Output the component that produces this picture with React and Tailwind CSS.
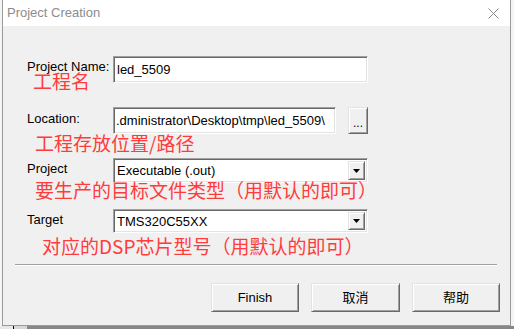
// Project Creation dialog (classic Win32 look) with red annotations

const sunken =
  'border border-t-[#a0a0a0] border-l-[#a0a0a0] border-b-white border-r-white shadow-[inset_1px_1px_0_#696969,inset_-1px_-1px_0_#e3e3e3] bg-white';
const raised =
  'border border-t-[#e3e3e3] border-l-[#e3e3e3] border-b-[#696969] border-r-[#696969] shadow-[inset_1px_1px_0_#ffffff,inset_-1px_-1px_0_#a0a0a0] bg-[#f0f0f0]';

const ui = "font-['Liberation_Sans','Noto_Sans_CJK_SC',sans-serif] text-[13px] text-black";
const note = "font-['Noto_Sans_CJK_SC',sans-serif] text-[19px] leading-[16px] h-[16px] text-[#ff3c3c] whitespace-nowrap";
const label = 'w-[86px] leading-[13px] pt-[4px]';

const Combo = ({ value, h }) => (
  <div className={`${sunken} ${h} w-[255px] flex items-center pl-[3px] pr-[2px]`}>
    <span className="flex-1 leading-[15px]">{value}</span>
    <div className={`${raised} w-[17px] h-[calc(100%-4px)] flex items-center justify-center`}>
      <svg width="7" height="4" viewBox="0 0 7 4">
        <path d="M0 0h7L3.5 4z" fill="#000" />
      </svg>
    </div>
  </div>
);

export default function App() {
  return (
    <div className={`w-[514px] h-[329px] bg-[#f4f4f4] overflow-hidden ${ui}`}>
      <div className="ml-[2px] w-[509px] h-[326px] border-x border-b border-[#9a9a9a] flex flex-col">
        {/* title bar */}
        <div className="h-[26px] bg-white flex items-center justify-between pl-[4px] pr-[11px]">
          <span className="text-[13px] text-[#8c8c8c]">Project Creation</span>
          <svg width="11" height="11" viewBox="0 0 11 11">
            <path d="M0.5 0.5l10 10M10.5 0.5l-10 10" stroke="#8a8a8a" strokeWidth="1" />
          </svg>
        </div>

        {/* body */}
        <div className="flex-1 bg-[#f0f0f0] pl-[24px] pt-[30px] flex flex-col">
          {/* Project Name */}
          <div className="flex items-start h-[27px]">
            <span className={label}>Project Name:</span>
            <div className={`${sunken} w-[255px] h-[27px] flex items-center pl-[3px] leading-[15px]`}>led_5509</div>
          </div>
          <div className={`${note} mt-[-10px] ml-[6px]`}>工程名</div>

          {/* Location */}
          <div className="flex items-start h-[27px] mt-[18px]">
            <span className={`${label} pt-[5px]`}>Location:</span>
            <div className={`${sunken} w-[223px] h-[27px] flex items-center pl-[2px] leading-[15px] overflow-hidden whitespace-nowrap`}>
              .dministrator\Desktop\tmp\led_5509\
            </div>
            <button className={`${raised} ml-[12px] w-[20px] h-[27px] flex items-center justify-center text-[12px] leading-none pt-[4px]`}>
              ...
            </button>
          </div>
          <div className={`${note} mt-[1px] ml-[8px]`}>工程存放位置/路径</div>

          {/* Project type */}
          <div className="flex items-start h-[25px] mt-[7px]">
            <span className={label}>Project</span>
            <Combo value="Executable (.out)" h="h-[25px]" />
          </div>
          <div className={`${note} mt-[-1px] ml-[8px]`}>要生产的目标文件类型（用默认的即可）</div>

          {/* Target */}
          <div className="flex items-start h-[24px] mt-[11px]">
            <span className={label}>Target</span>
            <Combo value="TMS320C55XX" h="h-[24px]" />
          </div>
          <div className={`${note} mt-[5px] ml-[15px]`}>对应的DSP芯片型号（用默认的即可）</div>

          {/* separator */}
          <div className="mt-[10px] ml-[-12px] w-[482px] border-t border-[#a0a0a0] border-b border-b-white" />

          {/* buttons */}
          <div className="mt-[17px] ml-[184px] flex gap-[12px]">
            <button className={`${raised} w-[88px] h-[29px]`}>Finish</button>
            <button className={`${raised} w-[89px] h-[29px]`}>取消</button>
            <button className={`${raised} w-[88px] h-[29px]`}>帮助</button>
          </div>
        </div>
      </div>

      {/* strip below the window */}
      <div className="flex h-[3px]">
        <div className="w-[13px] bg-[#e8e8e8]" />
        <div className="w-[1px] bg-black" />
        <div className="w-[13px] bg-[#d8d8d8]" />
        <div className="flex-1 bg-[#878787]" />
      </div>
    </div>
  );
}
